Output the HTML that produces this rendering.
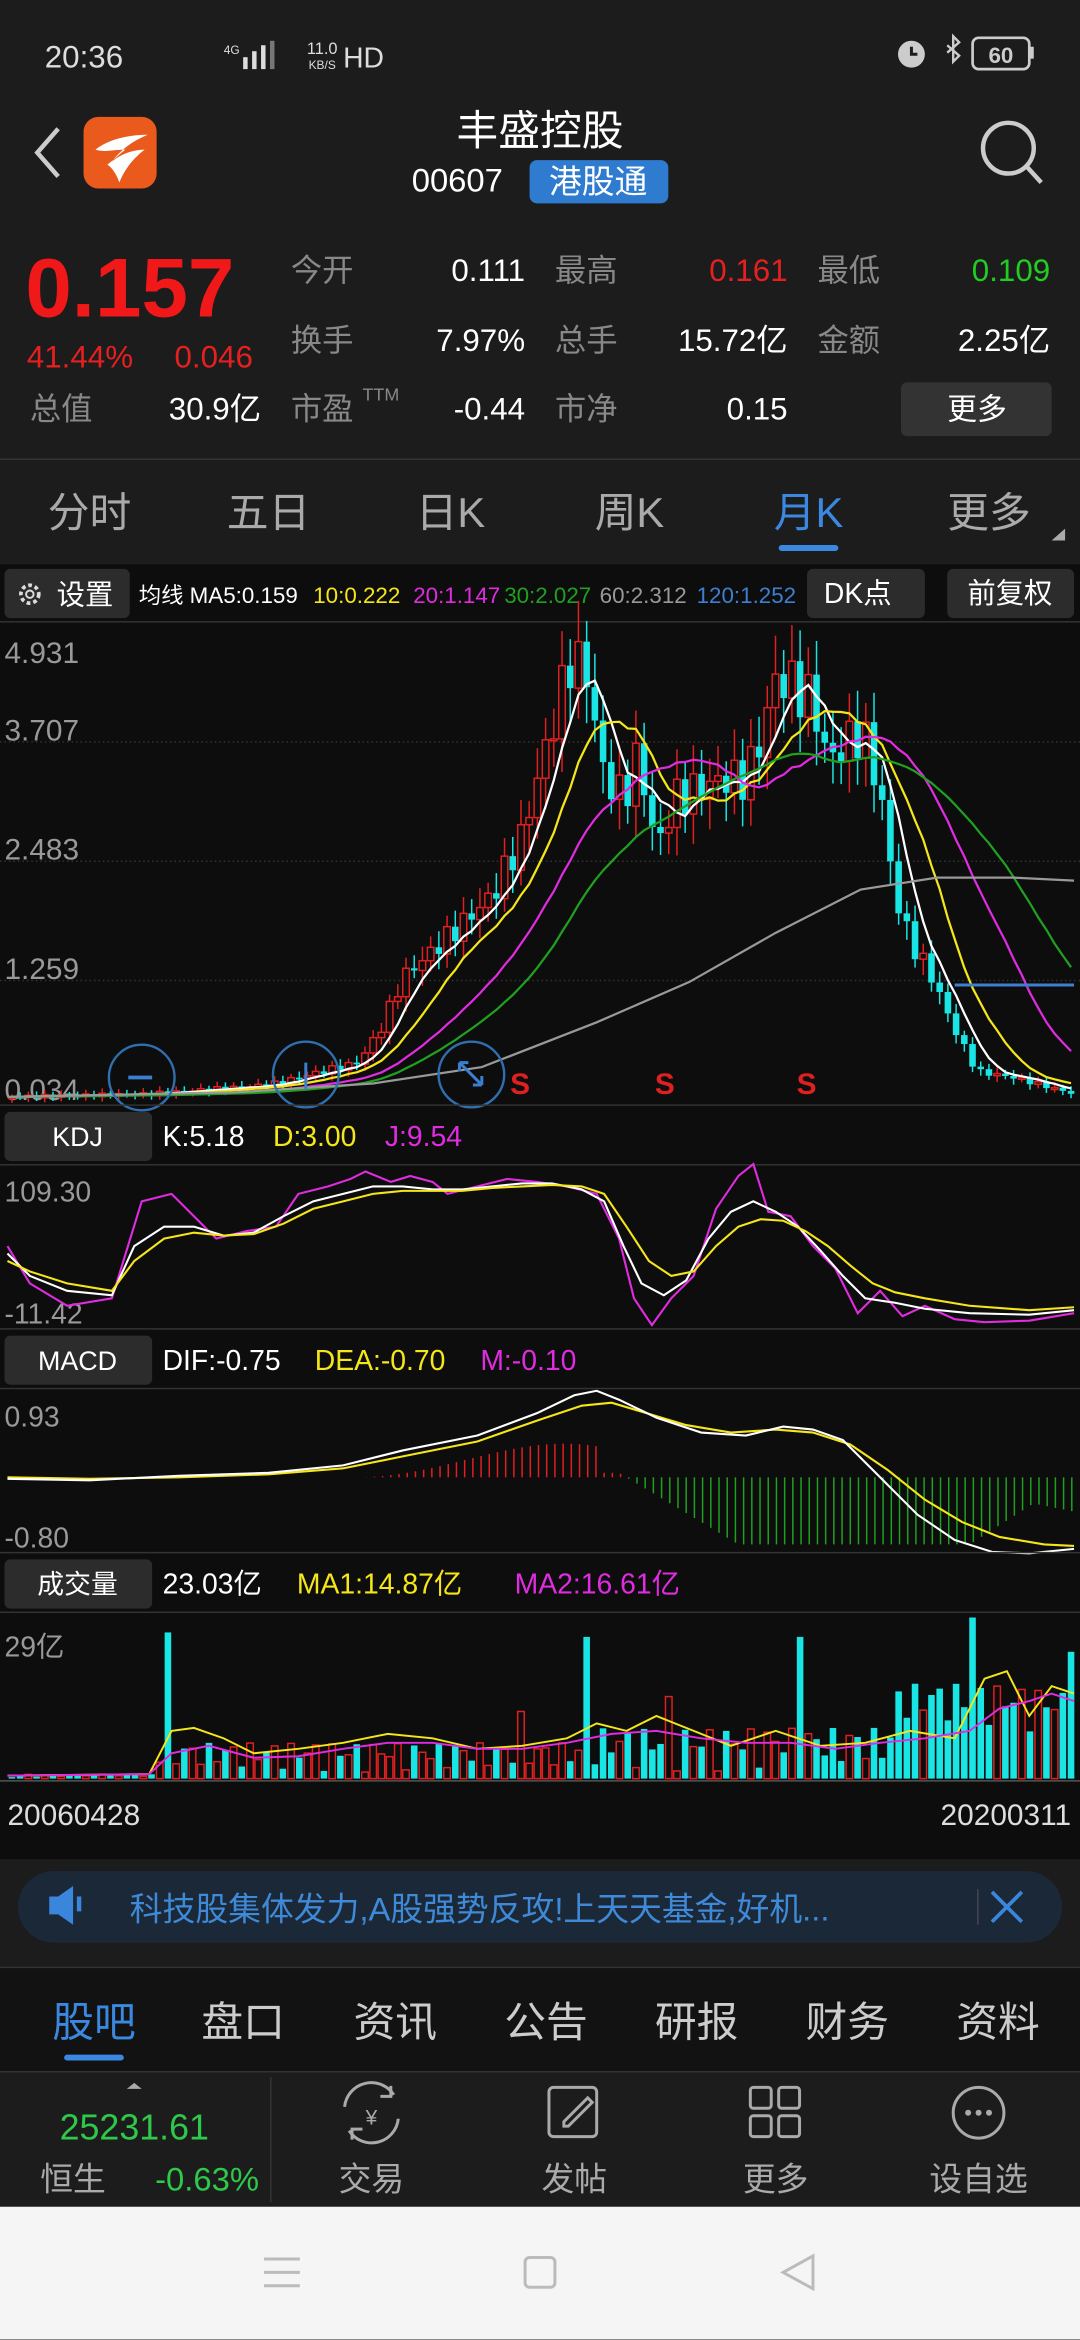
<!DOCTYPE html>
<html><head><meta charset="utf-8"><style>
html,body{margin:0;padding:0;background:#1b1b1b;width:1080px;height:2340px;overflow:hidden}
svg{display:block}
text{font-family:"Liberation Sans","Noto Sans CJK SC",sans-serif}
</style></head><body>
<svg id="s" width="1080" height="2340" viewBox="0 0 724 1568" xmlns="http://www.w3.org/2000/svg">
<rect width="724" height="1568" fill="#1c1c1c"/>
<!-- status -->
<text x="30" y="45" font-size="21" fill="#ddd">20:36</text>
<text x="150" y="36" font-size="8" fill="#ddd">4G</text>
<rect x="163" y="38" width="3" height="8" fill="#ddd"/><rect x="169" y="34" width="3" height="12" fill="#ddd"/><rect x="175" y="30" width="3" height="16" fill="#ddd"/><rect x="181" y="27" width="3" height="19" fill="#777"/>
<text x="216" y="36" font-size="11" fill="#ddd" text-anchor="middle">11.0</text>
<text x="216" y="46" font-size="8" fill="#ddd" text-anchor="middle">KB/S</text>
<text x="230" y="45" font-size="19" fill="#ddd">HD</text>
<circle cx="611" cy="36" r="9" fill="#ccc"/><path d="M611 31v5h4" stroke="#1c1c1c" stroke-width="2" fill="none"/>
<path d="M635 30l8 7-4 4V24l4 4-8 7" stroke="#ccc" stroke-width="1.6" fill="none"/>
<rect x="652" y="25" width="38" height="21" rx="4" fill="none" stroke="#ccc" stroke-width="1.8"/><rect x="690" y="31" width="3" height="8" fill="#ccc"/>
<text x="671" y="42" font-size="15" fill="#ccc" text-anchor="middle" font-weight="bold">60</text>
<!-- header -->
<path d="M39 86L25 102l14 16" stroke="#ccc" stroke-width="3" fill="none"/>
<rect x="56" y="78" width="49" height="48" rx="10" fill="#ea5a1c"/>
<path d="M64 100c10-8 25-10 35-10-10 4-18 10-24 18 6-5 14-8 22-8-8 6-14 14-17 22-2-6-5-10-8-12 4-3 8-7 12-10-8 0-14 2-20 0z" fill="#fff"/>
<text x="362" y="97" font-size="28" fill="#fff" text-anchor="middle">丰盛控股</text>
<text x="276" y="128" font-size="22" fill="#fff">00607</text>
<rect x="355" y="107" width="93" height="29" rx="5" fill="#2e7bd0"/>
<text x="401" y="129" font-size="22" fill="#fff" text-anchor="middle">港股通</text>
<circle cx="676" cy="99" r="17" fill="none" stroke="#ccc" stroke-width="3"/><path d="M688 111l10 11" stroke="#ccc" stroke-width="3"/>
<!-- quote -->
<text x="17" y="212" font-size="56" fill="#f01818" font-weight="bold">0.157</text>
<text x="18" y="246" font-size="21" fill="#e42020">41.44%</text>
<text x="117" y="246" font-size="21" fill="#e42020">0.046</text>
<text x="20" y="281" font-size="21" fill="#888">总值</text>
<text x="175" y="281" font-size="21" fill="#fff" text-anchor="end">30.9亿</text>
<g font-size="21" fill="#888">
<text x="195" y="188">今开</text><text x="372" y="188">最高</text><text x="548" y="188">最低</text>
<text x="195" y="235">换手</text><text x="372" y="235">总手</text><text x="548" y="235">金额</text>
<text x="195" y="281">市盈</text><text x="243" y="268" font-size="12">TTM</text><text x="372" y="281">市净</text></g>
<g font-size="21" fill="#fff" text-anchor="end">
<text x="352" y="188">0.111</text><text x="528" y="188" fill="#e42020">0.161</text><text x="704" y="188" fill="#22cc22">0.109</text>
<text x="352" y="235">7.97%</text><text x="528" y="235">15.72亿</text><text x="704" y="235">2.25亿</text>
<text x="352" y="281">-0.44</text><text x="528" y="281">0.15</text></g>
<rect x="604" y="256" width="101" height="36" rx="4" fill="#333"/>
<text x="655" y="281" font-size="20" fill="#fff" text-anchor="middle">更多</text>
<rect x="0" y="307" width="724" height="1" fill="#333"/>
<!-- tabs -->
<g font-size="28" fill="#aaa" text-anchor="middle">
<text x="60" y="353">分时</text><text x="180" y="353">五日</text><text x="302" y="353">日K</text><text x="422" y="353">周K</text><text x="542" y="353" fill="#3a88e0">月K</text><text x="663" y="353">更多</text></g>
<rect x="522" y="365" width="40" height="4" rx="2" fill="#3a88e0"/>
<path d="M705 362l9-8v8z" fill="#aaa"/>
<!-- chart area -->
<rect x="0" y="378" width="724" height="868" fill="#0d0d0d"/>
<rect x="3" y="381" width="84" height="33" rx="4" fill="#2c2c2c"/>
<circle cx="20" cy="398" r="6" fill="none" stroke="#ddd" stroke-width="2.5" stroke-dasharray="2.5 2"/><circle cx="20" cy="398" r="2.5" fill="none" stroke="#ddd" stroke-width="1.3"/>
<text x="38" y="405" font-size="19" fill="#fff">设置</text>
<g font-size="15"><text x="93" y="404" fill="#fff">均线 MA5:0.159</text><text x="210" y="404" fill="#f5e61a">10:0.222</text><text x="277" y="404" fill="#e02ce0">20:1.147</text><text x="338" y="404" fill="#20a020">30:2.027</text><text x="402" y="404" fill="#999">60:2.312</text><text x="467" y="404" fill="#3d7fd0">120:1.252</text></g>
<rect x="541" y="381" width="79" height="33" rx="4" fill="#2c2c2c"/><text x="575" y="404" font-size="19" fill="#fff" text-anchor="middle">DK点</text>
<rect x="635" y="381" width="85" height="33" rx="4" fill="#2c2c2c"/><text x="677" y="404" font-size="19" fill="#fff" text-anchor="middle">前复权</text>
<rect x="0" y="416" width="724" height="1" fill="#333"/>
<g stroke="#333" stroke-dasharray="1 2"><path d="M0 497H724M0 577H724M0 657H724"/></g>
<g font-size="20" fill="#999"><text x="3" y="444">4.931</text><text x="3" y="496">3.707</text><text x="3" y="576">2.483</text><text x="3" y="656">1.259</text><text x="3" y="737">0.034</text></g>
<g id="candles"></g>
<g id="mas" fill="none" stroke-width="1.5"></g>
<polyline points="5,735 157,732 250,726 323,715 400,685 462,658 520,625 577,596 628,588 680,588 720,590" stroke="#999" stroke-width="1.5" fill="none"/>
<polyline points="640,660 720,660" stroke="#3d7fd0" stroke-width="2" fill="none"/>
<g fill="none" stroke="#2f6fb0" stroke-width="1.6"><circle cx="95" cy="722" r="22"/><circle cx="205" cy="720" r="22"/><circle cx="316" cy="720" r="22"/></g>
<path d="M86 722h16" stroke="#3a7fd0" stroke-width="2.5"/><path d="M205 712v18" stroke="#3a7fd0" stroke-width="2"/><path d="M308 712l15 15M308 712v6M308 712h6M323 727v-6M323 727h-6" stroke="#3a7fd0" stroke-width="2"/>
<g font-size="20" fill="#e02020" font-weight="bold"><text x="342" y="733">S</text><text x="439" y="733">S</text><text x="534" y="733">S</text></g>
<rect x="0" y="740" width="724" height="1" fill="#333"/>
<!-- KDJ -->
<rect x="3" y="745" width="99" height="33" rx="4" fill="#2c2c2c"/><text x="52" y="768" font-size="18" fill="#fff" text-anchor="middle">KDJ</text>
<g font-size="19"><text x="109" y="768" fill="#fff">K:5.18</text><text x="183" y="768" fill="#f5e61a">D:3.00</text><text x="258" y="768" fill="#e02ce0">J:9.54</text></g>
<rect x="0" y="780" width="724" height="1" fill="#333"/>
<text x="3" y="805" font-size="19" fill="#999">109.30</text><text x="3" y="887" font-size="19" fill="#999">-11.42</text>
<g fill="none" stroke-width="1.4">
<polyline stroke="#e02ce0" points="5,835 20,860 45,875 75,870 95,805 115,800 130,815 145,830 165,825 185,822 200,800 220,795 235,790 245,785 262,792 275,788 290,792 300,800 320,795 340,790 360,792 380,795 400,800 415,830 425,870 437,888 450,870 465,855 480,810 495,788 505,780 515,812 530,815 545,835 560,850 575,880 590,865 605,882 620,875 640,884 660,886 690,885 720,880"/>
<polyline stroke="#fff" points="5,840 20,855 45,865 75,868 90,835 110,822 130,822 150,828 170,826 190,815 210,805 230,800 250,795 270,795 290,797 310,797 330,795 350,793 370,793 390,797 405,805 418,835 430,860 445,868 460,858 475,830 490,812 505,805 520,812 535,822 550,838 565,855 580,870 600,873 620,877 650,880 690,881 720,878"/>
<polyline stroke="#f5e61a" points="5,845 20,852 45,860 75,865 90,845 110,830 130,826 150,828 170,827 190,820 210,810 230,805 250,800 270,798 290,798 310,798 330,796 350,795 370,794 390,795 405,800 420,822 435,845 450,855 465,852 480,835 495,822 510,817 525,818 540,825 555,835 570,848 585,860 600,866 620,870 650,875 690,878 720,876"/>
</g>
<rect x="0" y="890" width="724" height="1" fill="#333"/>
<!-- MACD -->
<rect x="3" y="895" width="99" height="33" rx="4" fill="#2c2c2c"/><text x="52" y="918" font-size="18" fill="#fff" text-anchor="middle">MACD</text>
<g font-size="19"><text x="109" y="918" fill="#fff">DIF:-0.75</text><text x="211" y="918" fill="#f5e61a">DEA:-0.70</text><text x="322" y="918" fill="#e02ce0">M:-0.10</text></g>
<rect x="0" y="930" width="724" height="1" fill="#333"/>
<text x="3" y="956" font-size="19" fill="#999">0.93</text><text x="3" y="1037" font-size="19" fill="#999">-0.80</text>
<g id="macdbars"></g>
<g fill="none" stroke-width="1.4">
<polyline stroke="#f5e61a" points="5,990 60,991 120,990 180,988 230,984 270,976 320,966 360,952 390,942 410,940 430,946 460,955 490,960 520,958 545,960 570,968 595,985 620,1005 645,1020 670,1030 700,1035 720,1036"/>
<polyline stroke="#fff" points="5,991 60,992 120,989 180,987 230,982 270,972 320,962 360,947 385,935 400,932 415,938 440,950 470,960 500,962 525,956 545,958 565,965 590,990 615,1015 640,1032 665,1040 690,1041 720,1038"/>
</g>
<rect x="0" y="1040" width="724" height="1" fill="#333"/>
<!-- volume -->
<rect x="3" y="1045" width="99" height="33" rx="4" fill="#2c2c2c"/><text x="52" y="1068" font-size="18" fill="#fff" text-anchor="middle">成交量</text>
<g font-size="19"><text x="109" y="1068" fill="#fff">23.03亿</text><text x="199" y="1068" fill="#f5e61a">MA1:14.87亿</text><text x="345" y="1068" fill="#e02ce0">MA2:16.61亿</text></g>
<rect x="0" y="1080" width="724" height="1" fill="#333"/>
<text x="3" y="1110" font-size="19" fill="#999">29亿</text>
<g id="vol"></g>
<g fill="none" stroke-width="1.3">
<polyline stroke="#f5e61a" points="5,1190 100,1189 115,1160 130,1158 150,1165 170,1175 200,1172 230,1168 260,1162 290,1165 320,1172 350,1170 380,1165 400,1155 420,1160 440,1150 460,1158 490,1170 520,1160 550,1170 580,1168 610,1160 640,1165 660,1125 675,1120 690,1150 705,1130 720,1135"/>
<polyline stroke="#e02ce0" points="5,1190 100,1189 115,1175 140,1170 170,1178 200,1177 230,1172 260,1168 290,1168 320,1172 350,1172 380,1168 410,1162 440,1160 470,1165 500,1168 530,1168 560,1172 590,1168 620,1165 650,1160 670,1145 690,1140 705,1135 720,1140"/>
</g>
<rect x="0" y="1193" width="724" height="1" fill="#555"/>
<text x="5" y="1223" font-size="20" fill="#ddd">20060428</text><text x="718" y="1223" font-size="20" fill="#ddd" text-anchor="end">20200311</text>
<!-- banner -->
<rect x="12" y="1254" width="700" height="48" rx="24" fill="#1b2837"/>
<path d="M33 1271h6l10-7v26l-10-7h-6z" fill="#3a86dc"/><path d="M53 1271v10" stroke="#3a86dc" stroke-width="3"/>
<text x="87" y="1287" font-size="22" fill="#3f8ad8">科技股集体发力,A股强势反攻!上天天基金,好机...</text>
<rect x="655" y="1266" width="1" height="24" fill="#445"/>
<path d="M665 1268l20 20M685 1268l-20 20" stroke="#3a86dc" stroke-width="2.5"/>
<!-- bottom tabs -->
<rect x="0" y="1318" width="724" height="70" fill="#121212"/>
<rect x="0" y="1318" width="724" height="1" fill="#333"/>
<g font-size="28" fill="#ccc" text-anchor="middle"><text x="63" y="1365" fill="#3a88e0">股吧</text><text x="163" y="1365">盘口</text><text x="265" y="1365">资讯</text><text x="366" y="1365">公告</text><text x="467" y="1365">研报</text><text x="568" y="1365">财务</text><text x="669" y="1365">资料</text></g>
<rect x="43" y="1377" width="40" height="4" rx="2" fill="#3a88e0"/>
<rect x="0" y="1388" width="724" height="1" fill="#333"/>
<!-- bottom bar -->
<rect x="0" y="1389" width="724" height="90" fill="#1c1c1c"/>
<path d="M85 1400l5-4 5 4z" fill="#aaa"/>
<text x="90" y="1434" font-size="24" fill="#2ec84a" text-anchor="middle">25231.61</text>
<text x="27" y="1468" font-size="22" fill="#aaa">恒生</text><text x="104" y="1468" font-size="22" fill="#2ec84a">-0.63%</text>
<rect x="181" y="1392" width="1" height="84" fill="#333"/>
<g fill="none" stroke="#aaa" stroke-width="2">
<path d="M231 1412a18 18 0 0 1 33-8M267 1420a18 18 0 0 1-33 8"/><path d="M262 1398v7h-7M236 1434v-7h7"/>
<rect x="368" y="1399" width="32" height="33" rx="3"/><path d="M378 1422l16-16 3 3-16 16h-3z"/>
<rect x="503" y="1399" width="14" height="14" rx="2"/><rect x="522" y="1399" width="14" height="14" rx="2"/><rect x="503" y="1418" width="14" height="14" rx="2"/><rect x="522" y="1418" width="14" height="14" rx="2"/>
<circle cx="656" cy="1416" r="17"/></g>
<text x="249" y="1424" font-size="14" fill="#aaa" text-anchor="middle">¥</text>
<g fill="#aaa"><circle cx="649" cy="1416" r="2"/><circle cx="656" cy="1416" r="2"/><circle cx="663" cy="1416" r="2"/></g>
<g font-size="22" fill="#aaa" text-anchor="middle"><text x="249" y="1468">交易</text><text x="385" y="1468">发帖</text><text x="520" y="1468">更多</text><text x="656" y="1468">设自选</text></g>
<!-- nav -->
<rect x="0" y="1479" width="724" height="89" fill="#f5f5f5"/>
<path d="M177 1514h24M177 1523h24M177 1532h24" stroke="#bbb" stroke-width="2"/>
<rect x="352" y="1513" width="20" height="20" rx="3" fill="none" stroke="#bbb" stroke-width="2"/>
<path d="M545 1512l-20 11 20 11z" fill="none" stroke="#bbb" stroke-width="2"/>
</svg>
<script>
(function(){
var NS="http://www.w3.org/2000/svg";
function el(p,t,a){var e=document.createElementNS(NS,t);for(var k in a)e.setAttribute(k,a[k]);p.appendChild(e);return e;}
var kp=[[5,735],[100,733],[180,727],[240,712],[255,690],[270,655],[300,628],[330,600],[350,560],[362,515],[372,480],[383,440],[393,450],[405,520],[418,535],[428,505],[440,570],[452,535],[470,528],[485,522],[500,522],[510,495],[520,455],[530,458],[545,470],[555,510],[565,500],[578,490],[590,530],[600,600],[610,630],[625,655],[640,690],[655,718],[680,722],[720,733]];
function interp(x){for(var i=1;i<kp.length;i++){if(x<=kp[i][0]){var a=kp[i-1],b=kp[i];return a[1]+(b[1]-a[1])*(x-a[0])/(b[0]-a[0]);}}return kp[kp.length-1][1];}
var N=130,xs=[],ys=[];
for(var i=0;i<N;i++){var x=8+i*710/(N-1);xs.push(x);var base=interp(x);var amp=(736-base)*0.06+1;ys.push(base+Math.sin(i*2.7)*amp);}
var cg=document.getElementById("candles");
for(var i=0;i<N;i++){var o=i?ys[i-1]:ys[i]+1,c=ys[i];var amp=(736-c)*0.04+1.5;var hi=Math.min(o,c)-amp*(1+Math.abs(Math.sin(i*1.3))),lo=Math.max(o,c)+amp*(1+Math.abs(Math.cos(i*1.7)));
var up=c<o;var col=up?"#e02020":"#19e5e5";
el(cg,"line",{x1:xs[i],x2:xs[i],y1:hi,y2:lo,stroke:col,"stroke-width":1});
var t=Math.min(o,c),h=Math.max(Math.abs(o-c),1.2);
el(cg,"rect",{x:xs[i]-2.2,y:t,width:4.4,height:h,fill:up?"#0d0d0d":col,stroke:col,"stroke-width":up?1:0});}
function ma(n){var r=[];for(var i=0;i<N;i++){var s=0,k=0;for(var j=Math.max(0,i-n+1);j<=i;j++){s+=736-ys[j];k++;}r.push(736-s/k);}return r;}
var mg=document.getElementById("mas");
[[5,"#fff"],[10,"#f5e61a"],[20,"#e02ce0"],[30,"#20a020"]].forEach(function(m){var a=ma(m[0]),p="";for(var i=0;i<N;i++)p+=xs[i].toFixed(1)+","+a[i].toFixed(1)+" ";el(mg,"polyline",{points:p,stroke:m[1]});});
var bg=document.getElementById("macdbars");
for(var x=240;x<=720;x+=5.5){var v;if(x<415){v=-Math.max(0,(x-240)/175)*(30*Math.sin((x-240)/175*2.6)+2);if(x>400)v=-3;}else{v=Math.min(45,(x-420)*0.6)*(x>650?Math.max(0.2,(720-x)/70):1);if(x>630)v=Math.max(v,(x-630)*0.2+5);}
var col=v<0?"#e02020":"#20a020";el(bg,"line",{x1:x,x2:x,y1:990,y2:990+v,stroke:col,"stroke-width":1});}
var vg=document.getElementById("vol");
for(var i=0;i<N;i++){var x=xs[i];var h;if(x<105)h=1+Math.abs(Math.sin(i))*2;else{var s=Math.abs(Math.sin(i*1.9));h=4+s*(x<390?20:30);if(x>600)h+=Math.abs(Math.sin(i*3.1))*30;}
if(i==19)h=98;if(i==96)h=95;if(i==70)h=95;if(i==117)h=108;if(i==129)h=85;if(i==62)h=45;if(i==80)h=55;
var up=ys[i]<(i?ys[i-1]:ys[i]);var col=up?"#e02020":"#19e5e5";
el(vg,"rect",{x:x-2.2,y:1192-h,width:4.4,height:h,fill:up?"#0d0d0d":col,stroke:col,"stroke-width":up?1:0});}
})();
</script>
</body></html>
